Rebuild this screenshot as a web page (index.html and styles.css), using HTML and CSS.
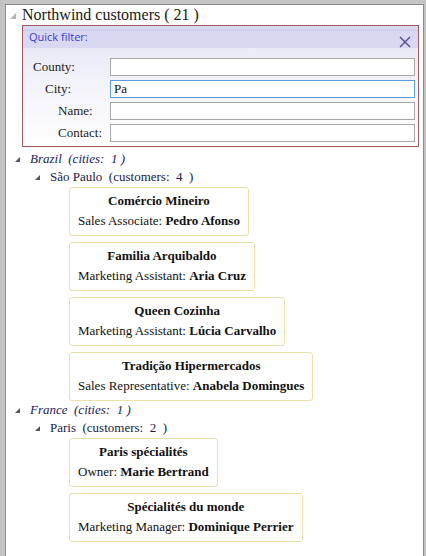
FILE: index.html
```html
<!DOCTYPE html>
<html>
<head>
<meta charset="utf-8">
<link rel="stylesheet" href="styles.css">
</head>
<body>
<div class="frame">
  <div class="title-row">
    <span class="tri tri-light"></span>
    <span class="title">Northwind customers ( 21 )</span>
  </div>
  <div class="filter">
    <div class="filter-head">
      <span class="filter-title">Quick filter:</span>
      <svg class="close" width="12" height="12" viewBox="0 0 12 12"><path d="M1 1 L11 11 M11 1 L1 11" stroke="#4a4aa0" stroke-width="1.4" fill="none"/></svg>
    </div>
    <div class="filter-body">
      <div class="frow"><span class="lbl l-country">County:</span><span class="inp"></span></div>
      <div class="frow"><span class="lbl l-city">City:</span><span class="inp inp-focus">Pa</span></div>
      <div class="frow"><span class="lbl l-name">Name:</span><span class="inp"></span></div>
      <div class="frow"><span class="lbl l-contact">Contact:</span><span class="inp"></span></div>
    </div>
  </div>

  <div class="tree">
    <div class="country"><span class="tri"></span><span class="ctext">Brazil&nbsp; (cities:&nbsp; 1 )</span></div>
    <div class="city"><span class="tri"></span><span class="citytext">São Paulo&nbsp; (customers:&nbsp; 4&nbsp; )</span></div>
    <div class="cards">
      <div class="card"><div class="ct">Comércio Mineiro</div><div class="cs">Sales Associate: <b>Pedro Afonso</b></div></div>
      <div class="card"><div class="ct">Familia Arquibaldo</div><div class="cs">Marketing Assistant: <b>Aria Cruz</b></div></div>
      <div class="card"><div class="ct">Queen Cozinha</div><div class="cs">Marketing Assistant: <b>Lúcia Carvalho</b></div></div>
      <div class="card"><div class="ct">Tradição Hipermercados</div><div class="cs">Sales Representative: <b>Anabela Domingues</b></div></div>
    </div>
    <div class="country"><span class="tri"></span><span class="ctext">France&nbsp; (cities:&nbsp; 1 )</span></div>
    <div class="city"><span class="tri"></span><span class="citytext">Paris&nbsp; (customers:&nbsp; 2&nbsp; )</span></div>
    <div class="cards">
      <div class="card"><div class="ct">Paris spécialités</div><div class="cs">Owner: <b>Marie Bertrand</b></div></div>
      <div class="card"><div class="ct">Spécialités du monde</div><div class="cs">Marketing Manager: <b>Dominique Perrier</b></div></div>
    </div>
  </div>
</div>
</body>
</html>
```
FILE: styles.css
```css
html, body {
  margin: 0;
  padding: 0;
  background: #c4c4c4;
  height: 556px;
  overflow: hidden;
}
.frame {
  margin: 4px 0 0 5px;
  width: 417px;
  height: 560px;
  background: #fff;
  border: 1px solid #8c8c8c;
  font-family: "Liberation Serif", "Times New Roman", serif;
  color: #111;
}
.title-row {
  display: flex;
  align-items: center;
  height: 20px;
  padding-left: 4px;
}
.tri {
  width: 0;
  height: 0;
  border-left: 6px solid transparent;
  border-bottom: 6px solid #555;
  display: inline-block;
}
.tri-light {
  border-bottom-color: #b5b5b5;
  margin-top: 2px;
}
.title {
  font-size: 16px;
  margin-left: 6px;
  color: #1a1a1a;
}
.filter {
  margin-left: 16px;
  width: 397px;
  box-sizing: border-box;
  border: 1px solid #a85a5a;
  height: 122px;
  background: linear-gradient(#e6e6f6, #f8f8fc 70%, #ffffff);
}
.filter-head {
  height: 22px;
  background: #d8d8f2;
  display: flex;
  justify-content: space-between;
  align-items: flex-start;
  position: relative;
}
.filter-head::before {
  content: "";
  position: absolute;
  left: 0;
  right: 0;
  top: 4px;
  border-top: 1px dotted #b8b8dc;
}
.filter-title {
  font-family: "Open Sans", "Liberation Sans", sans-serif;
  font-size: 11px;
  color: #3b3bd0;
  margin: 3px 0 0 6px;
}
.close {
  margin: 10px 7px 0 0;
}
.filter-body {
  padding-top: 10px;
  display: flex;
  flex-direction: column;
  gap: 4px;
}
.frow {
  display: flex;
  align-items: center;
  height: 18px;
}
.lbl {
  width: 87px;
  font-size: 13px;
  box-sizing: border-box;
  color: #222;
}
.l-country { padding-left: 10px; }
.l-city { padding-left: 22px; }
.l-name { padding-left: 35px; }
.l-contact { padding-left: 35px; }
.inp {
  width: 305px;
  height: 18px;
  box-sizing: border-box;
  border: 1px solid #a8a8a8;
  background: #fff;
  font-size: 13px;
  line-height: 16px;
  padding-left: 3px;
}
.inp-focus {
  border-color: #5b9be0;
}
.tree {
  padding-top: 3px;
}
.country, .city {
  display: flex;
  align-items: center;
  height: 18px;
}
.country { padding-left: 9px; }
.city { padding-left: 29px; }
.country .tri, .city .tri {
  border-left-width: 5px;
  border-bottom-width: 5px;
}
.ctext {
  font-style: italic;
  font-size: 13px;
  margin-left: 10px;
  color: #20205a;
}
.citytext {
  font-size: 13px;
  margin-left: 10px;
  color: #202040;
}
.cards {
  padding: 1px 0 0 63px;
  display: flex;
  flex-direction: column;
  align-items: flex-start;
  gap: 6px;
}
.card {
  border: 1px solid #ece0aa;
  border-radius: 3px;
  padding: 3px 8px 5px 8px;
  font-size: 13px;
  line-height: 20px;
  text-align: center;
  height: 49px;
  box-sizing: border-box;
}
.ct {
  font-weight: bold;
}
.cs b {
  font-weight: bold;
}
```
